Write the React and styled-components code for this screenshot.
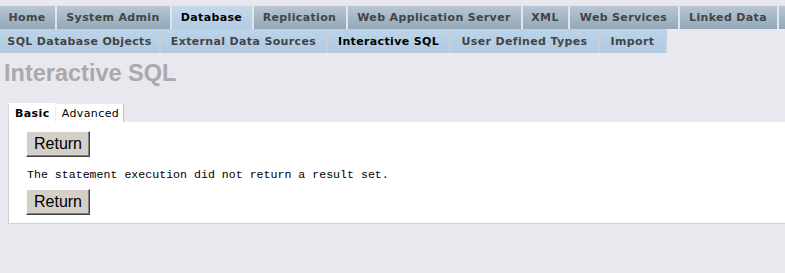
import styled, { createGlobalStyle } from "styled-components";

const GlobalStyle = createGlobalStyle`
  html, body {
    margin: 0;
    padding: 0;
    background: #e9e8ee;
    overflow: hidden;
  }
`;

const topTabs = [
  { label: "Home", width: 57 },
  { label: "System Admin", width: 115 },
  { label: "Database", width: 82, active: true },
  { label: "Replication", width: 94 },
  { label: "Web Application Server", width: 175 },
  { label: "XML", width: 47 },
  { label: "Web Services", width: 110 },
  { label: "Linked Data", width: 99 },
  { label: "Help", width: 60 },
];

const subTabs = [
  { label: "SQL Database Objects", width: 161 },
  { label: "External Data Sources", width: 167 },
  { label: "Interactive SQL", width: 123, active: true },
  { label: "User Defined Types", width: 149 },
  { label: "Import", width: 67 },
];

const Page = styled.div`
  width: 785px;
  height: 273px;
  padding-top: 5px;
  box-sizing: border-box;
  overflow: hidden;
  font-family: "DejaVu Sans", Verdana, sans-serif;
`;

const TabRow = styled.div`
  display: flex;
  height: 24px;
  white-space: nowrap;
  overflow: hidden;
`;

const TopTab = styled.div`
  flex: none;
  width: ${(p) => p.$width}px;
  display: flex;
  align-items: center;
  justify-content: center;
  padding-right: 1px;
  font-size: 11px;
  font-weight: bold;
  letter-spacing: 0.35px;
  color: ${(p) => (p.$active ? "#000" : "#444")};
  background: ${(p) =>
    p.$active
      ? "linear-gradient(#c4d8ea, #b2cce2)"
      : "linear-gradient(#b7c7d3, #93a8b8)"};
  border-top: 1px solid #dde3e8;
  border-right: 2px solid #e2e6ea;
  box-sizing: border-box;
`;

const SubTab = styled.div`
  flex: none;
  width: ${(p) => p.$width}px;
  display: flex;
  align-items: center;
  justify-content: center;
  font-size: 11px;
  font-weight: bold;
  letter-spacing: 0.35px;
  color: ${(p) => (p.$active ? "#000" : "#444")};
  background: linear-gradient(#bcd4e8, #b0cae2);
  border-right: 2px solid #c9ced4;
  box-sizing: border-box;
`;

const Title = styled.h1`
  margin: 7px 0 0 4px;
  font-family: "Liberation Sans", Arial, sans-serif;
  font-size: 23.5px;
  font-weight: bold;
  color: #aaa9ad;
  line-height: 26px;
`;

const Panel = styled.div`
  margin: 17px 0 0 8px;
`;

const PanelTabs = styled.div`
  display: flex;
  align-items: flex-end;
  height: 19px;
`;

const PanelTab = styled.div`
  padding: 0 4px 0 6px;
  height: 19px;
  display: flex;
  align-items: center;
  font-size: 11px;
  letter-spacing: 0.4px;
  font-weight: ${(p) => (p.$active ? "bold" : "normal")};
  color: #000;
  background: #fff;
  box-sizing: border-box;
  border: 1px solid ${(p) => (p.$active ? "#fff" : "#c4c4c4")};
  border-left-color: ${(p) => (p.$active ? "#d8d8d8" : "#eee")};
  border-top-color: ${(p) => (p.$active ? "#fff" : "#eee")};
  border-bottom: none;
`;

const PanelBody = styled.div`
  background: #fff;
  border-left: 1px solid #d0d0d0;
  border-bottom: 1px solid #d0d0d0;
  padding: 9px 0 8px 17px;
`;

const Button = styled.button`
  display: block;
  width: 64px;
  height: 26px;
  padding: 0;
  font-family: "Liberation Sans", Arial, sans-serif;
  font-size: 16px;
  color: #000;
  background: #d4d0c8;
  border: 1px solid;
  border-color: #fff #404040 #404040 #fff;
  box-shadow: inset -1px -1px 0 #808080;
`;

const Message = styled.p`
  margin: 11px 0 7px 1px;
  font-family: "Liberation Mono", "Courier New", monospace;
  font-size: 11.6px;
  line-height: 14px;
  color: #000;
`;

export default function App() {
  return (
    <Page>
      <GlobalStyle />
      <TabRow>
        {topTabs.map((t) => (
          <TopTab key={t.label} $width={t.width} $active={t.active}>
            {t.label}
          </TopTab>
        ))}
      </TabRow>
      <TabRow>
        {subTabs.map((t) => (
          <SubTab key={t.label} $width={t.width} $active={t.active}>
            {t.label}
          </SubTab>
        ))}
      </TabRow>
      <Title>Interactive SQL</Title>
      <Panel>
        <PanelTabs>
          <PanelTab $active>Basic</PanelTab>
          <PanelTab>Advanced</PanelTab>
        </PanelTabs>
        <PanelBody>
          <Button>Return</Button>
          <Message>The statement execution did not return a result set.</Message>
          <Button>Return</Button>
        </PanelBody>
      </Panel>
    </Page>
  );
}
